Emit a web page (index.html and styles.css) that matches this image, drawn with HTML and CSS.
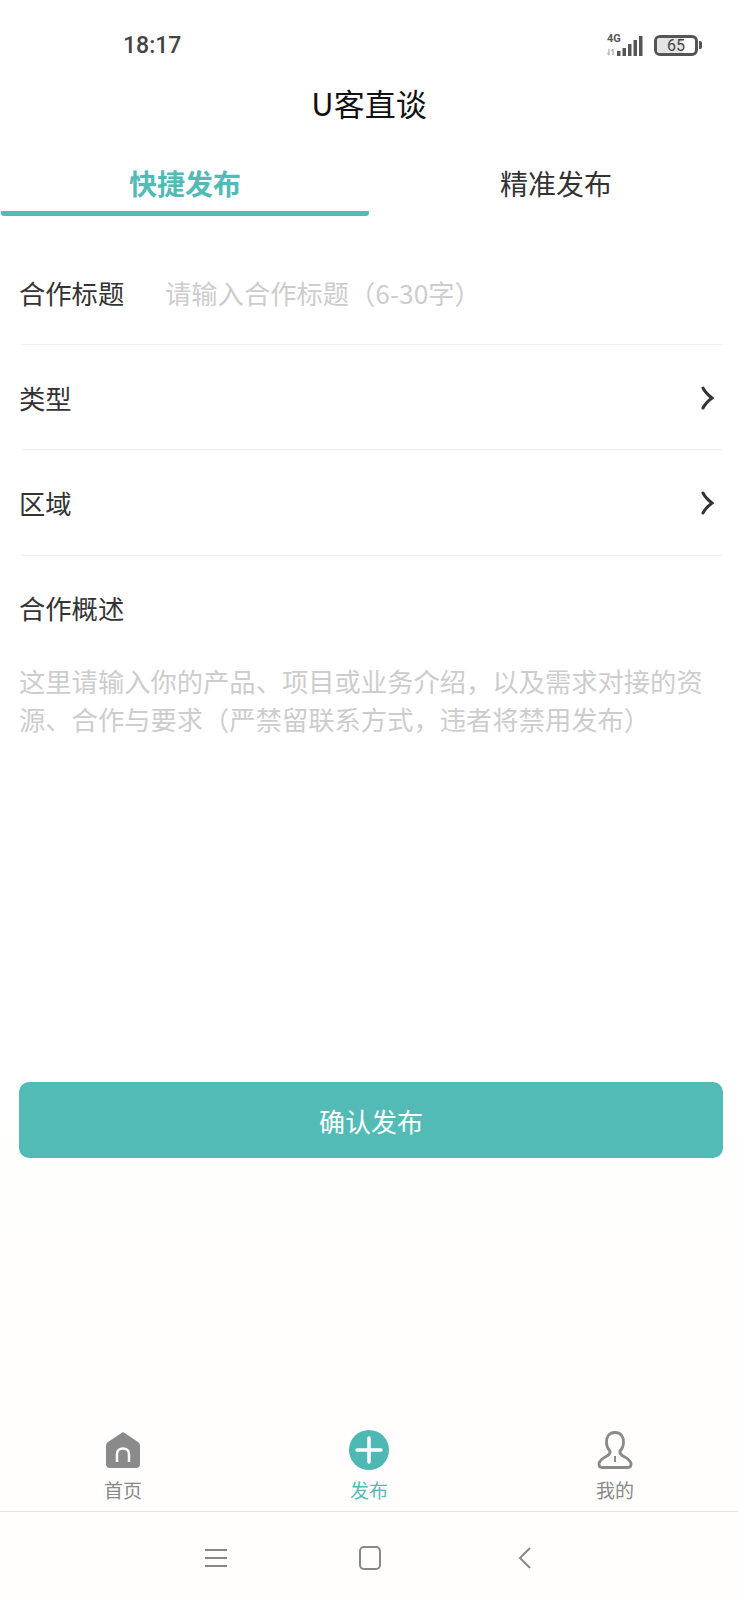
FILE: index.html
```html
<!DOCTYPE html>
<html lang="zh-CN">
  <head>
    <meta charset="UTF-8" />
    <meta name="viewport" content="width=device-width, initial-scale=1.0" />
    <title>U客直谈</title>
    <link rel="stylesheet" href="styles.css">
  </head>
  <body>
    <div class="page">
      <div class="status-bar">
        <span class="time">18:17</span>
        <div class="status-icons">
          <svg class="signal" width="40" height="24" viewBox="0 0 40 24">
            <text x="2" y="9" class="net-text">4G</text>
            <path d="M4 16v6M2.500 20l1.500 2M8 22v-6M6.500 18l1.500-2" stroke="#aaa" stroke-width="1.200" fill="none" />
            <rect x="12" y="18" width="3.500" height="5" fill="#555" />
            <rect x="17.500" y="15" width="3.500" height="8" fill="#555" />
            <rect x="23" y="11" width="3.500" height="12" fill="#555" />
            <rect x="28.500" y="7" width="3.500" height="16" fill="#555" />
            <rect x="34" y="3" width="3.500" height="20" fill="#555" />
          </svg>
          <div class="battery">
            <div class="battery-body">
              <div class="battery-level" style="width: 65%"></div>
              <span class="battery-text">65</span>
            </div>
            <div class="battery-nub"></div>
          </div>
        </div>
      </div>

      <h1 class="title">U客直谈</h1>

      <div class="tabs">
        <div class="tab tab-active">快捷发布</div>
        <div class="tab tab-other">精准发布</div>
      </div>

      <div class="form">
        <div class="row">
          <span class="row-label">合作标题</span>
          <span class="placeholder">请输入合作标题（6-30字）</span>
        </div>
        <div class="row">
          <span class="row-label">类型</span>
          <svg class="chevron" width="13" height="24" viewBox="0 0 13 24">
            <path d="M2 2C4 6 7 9 11 12C7 15 4 18 2 22" />
          </svg>
        </div>
        <div class="row row-last">
          <span class="row-label">区域</span>
          <svg class="chevron" width="13" height="24" viewBox="0 0 13 24">
            <path d="M2 2C4 6 7 9 11 12C7 15 4 18 2 22" />
          </svg>
        </div>
        <div class="summary">
          <div class="summary-label">合作概述</div>
          <div class="summary-text">这里请输入你的产品、项目或业务介绍，以及需求对接的资源、合作与要求（严禁留联系方式，违者将禁用发布）</div>
        </div>
        <button class="submit">确认发布</button>
      </div>

      <div class="tabbar">
        <div class="tabbar-item">
          <svg width="36" height="38" viewBox="0 0 36 38">
            <path d="M18 1L33 11C34.500 12 35 13 35 15V33C35 35.500 33.500 37 31 37H5C2.500 37 1 35.500 1 33V15C1 13 1.500 12 3 11Z" fill="#8a8a8a" />
            <path d="M12 31V23C12 19.500 14.500 17.500 18 17.500C21.500 17.500 24 19.500 24 23V31" fill="none" stroke="#fff" stroke-width="2.500" />
          </svg>
          <span>首页</span>
        </div>
        <div class="tabbar-item tabbar-active">
          <svg width="40" height="40" viewBox="0 0 40 40">
            <circle cx="20" cy="20" r="20" fill="#4db8b4" />
            <path d="M20 8V32M8 20H32" stroke="#fff" stroke-width="3.500" stroke-linecap="round" />
          </svg>
          <span>发布</span>
        </div>
        <div class="tabbar-item">
          <svg width="36" height="38" viewBox="0 0 36 38">
            <path d="M18 1.500C12 1.500 9.500 6 9.500 11C9.500 15 11 18 13 20C13.500 22 12.500 23.500 10 25C7 26.500 2 29 2 33C2 35.500 3 36.500 5 36.500H31C33 36.500 34 35.500 34 33C34 29 29 26.500 26 25C23.500 23.500 22.500 22 23 20C25 18 26.500 15 26.500 11C26.500 6 24 1.500 18 1.500Z" fill="none" stroke="#8a8a8a" stroke-width="2.800" />
            <path d="M18 25V31" stroke="#8a8a8a" stroke-width="2" />
          </svg>
          <span>我的</span>
        </div>
      </div>

      <div class="nav-bar">
        <svg width="22" height="20" viewBox="0 0 22 20">
          <path d="M0 2H22M0 10H22M0 18H22" stroke="#888" stroke-width="1.800" />
        </svg>
        <svg width="22" height="24" viewBox="0 0 22 24">
          <rect x="1" y="1" width="20" height="22" rx="4" fill="none" stroke="#888" stroke-width="2" />
        </svg>
        <svg class="nav-back" width="14" height="24" viewBox="0 0 14 24">
          <path d="M12 2L2 12L12 22" fill="none" stroke="#888" stroke-width="2" />
        </svg>
      </div>
    </div>
  </body>
</html>
```

FILE: styles.css
```css
* {
  box-sizing: border-box;
}
body {
  font-family: "Noto Sans CJK SC", "Noto Sans", sans-serif;
  margin: 0;
  background-color: #fff;
  color: #333;
}
.page {
  display: flex;
  flex-direction: column;
  height: 1600px;
  background: linear-gradient(#fff 60%, #fffefd 85%);
}

/* status bar */
.status-bar {
  display: flex;
  justify-content: space-between;
  align-items: center;
  height: 72px;
  padding: 18px 36px 0 123px;
}
.time {
  font-family: Roboto, sans-serif;
  font-size: 23px;
  font-weight: 500;
  color: #444;
}
.status-icons {
  display: flex;
  align-items: center;
  gap: 9px;
}
.signal {
  display: block;
}
.net-text {
  font-family: Roboto, sans-serif;
  font-size: 11px;
  font-weight: 700;
  fill: #555;
}
.battery {
  display: flex;
  align-items: center;
  gap: 1px;
}
.battery-body {
  position: relative;
  width: 44px;
  height: 21px;
  border: 3px solid #555;
  border-radius: 6px;
  overflow: hidden;
}
.battery-level {
  height: 100%;
  background-color: #e4e4e4;
}
.battery-text {
  position: absolute;
  inset: 0;
  text-align: center;
  font-family: Roboto, sans-serif;
  font-size: 16px;
  line-height: 15px;
  color: #444;
}
.battery-nub {
  width: 3px;
  height: 8px;
  background-color: #555;
  border-radius: 0 2px 2px 0;
}

/* header */
.title {
  margin: 0;
  height: 56px;
  padding-top: 7px;
  font-size: 31px;
  font-weight: 400;
  line-height: 48px;
  text-align: center;
  color: #111;
}
.tabs {
  display: flex;
}
.tab {
  flex: none;
  width: 369px;
  height: 88px;
  padding-top: 32px;
  font-size: 28px;
  line-height: 46px;
  text-align: center;
  color: #333;
}
.tab-active {
  width: 368px;
  margin-left: 1px;
  font-weight: 700;
  color: #52bbb6;
  border-bottom: 5px solid #52bbb6;
  border-radius: 0 0 3px 3px;
}
.tab-other {
  padding-left: 5px;
}

/* form */
.form {
  padding-top: 24px;
}
.row {
  display: flex;
  align-items: center;
  justify-content: space-between;
  height: 105px;
  margin: 0 16px 0 21px;
  padding: 1px 8px 0 0;
  border-bottom: 1px solid #eeeeee;
}
.row-last {
  height: 106px;
}
.row-label {
  flex: none;
  width: 146px;
  margin-left: -2px;
  font-size: 26.300px;
  line-height: 36px;
}
.placeholder {
  flex: 1;
  font-size: 26.300px;
  line-height: 36px;
  color: #cdcdcd;
}
.chevron {
  display: block;
}
.chevron path {
  fill: none;
  stroke: #333;
  stroke-width: 3;
  stroke-linecap: round;
}
.summary {
  padding: 34px 20px 0 19px;
}
.summary-label {
  font-size: 26.300px;
  line-height: 36px;
}
.summary-text {
  margin-top: 36px;
  font-size: 26.300px;
  line-height: 38px;
  color: #cdcdcd;
}
.submit {
  display: block;
  width: 704px;
  height: 76px;
  margin: 344px 0 0 19px;
  border: none;
  border-radius: 10px;
  background-color: #52bbb6;
  font-family: inherit;
  font-size: 26px;
  color: #fff;
}

/* bottom bars */
.tabbar {
  display: flex;
  margin-top: auto;
  height: 84px;
  border-bottom: 1px solid #e4e4e4;
}
.tabbar-item {
  flex: 1;
  display: flex;
  flex-direction: column;
  align-items: center;
  justify-content: flex-end;
  gap: 7px;
  padding-bottom: 7px;
  font-size: 19px;
  line-height: 28px;
  color: #888;
}
.tabbar-item svg {
  display: block;
}
.tabbar-active {
  gap: 6px;
  color: #52bbb6;
}
.nav-bar {
  display: flex;
  align-items: center;
  gap: 131.500px;
  height: 88px;
  padding: 4px 0 0 205px;
}
.nav-back {
  margin-left: 6px;
}
```
